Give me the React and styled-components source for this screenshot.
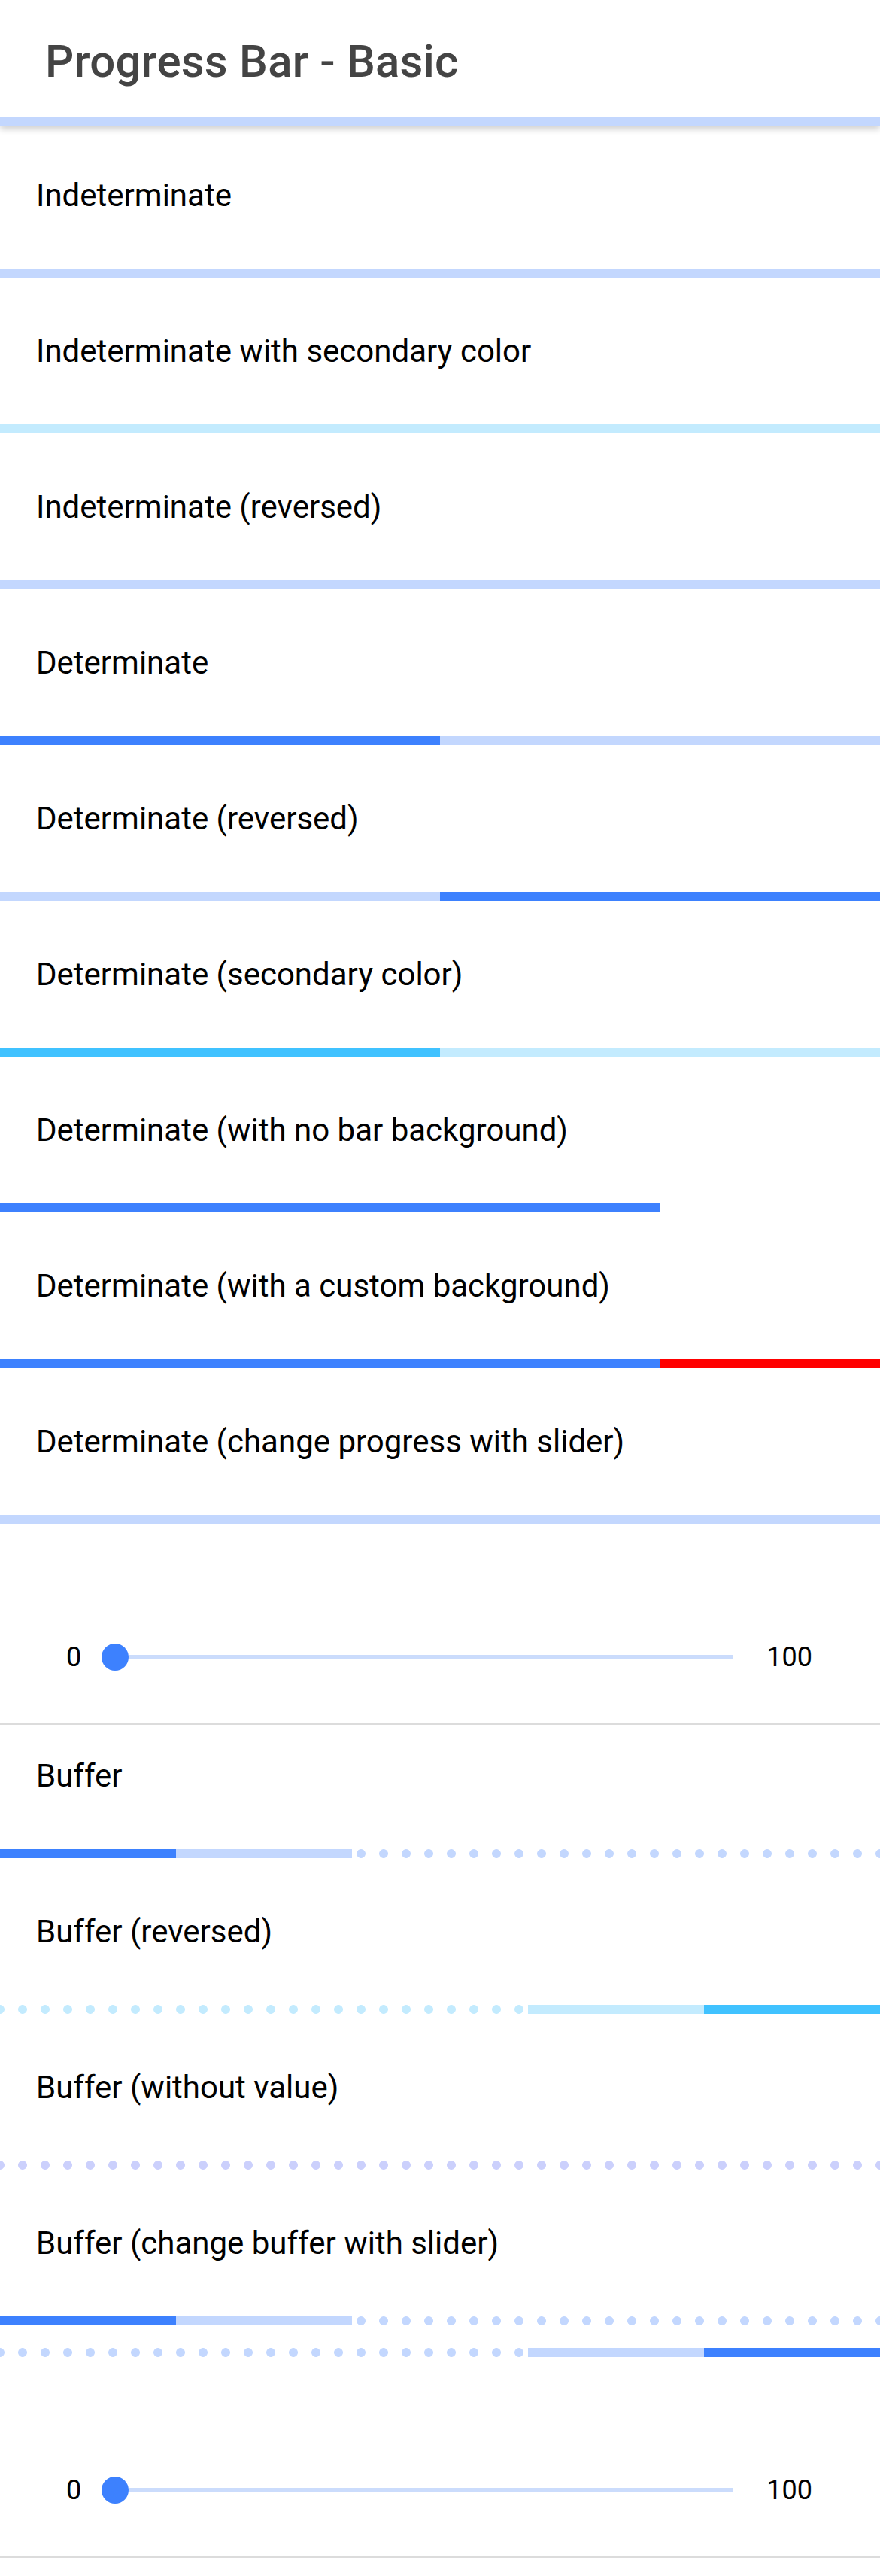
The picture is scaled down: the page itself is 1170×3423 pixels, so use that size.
import React from 'react';
import styled, { createGlobalStyle } from 'styled-components';

const GlobalStyle = createGlobalStyle`
  html, body {
    margin: 0;
    padding: 0;
    background: #ffffff;
  }
  body {
    font-family: Roboto, "Noto Sans", "Liberation Sans", sans-serif;
    color: #000;
  }
`;

const PRIMARY = '#3d81fe';
const PRIMARY_LIGHT = '#c3d7fe';
const SECONDARY = '#40c2ff';
const SECONDARY_LIGHT = '#c3ebfe';

const Page = styled.div`
  width: 1170px;
  min-height: 3423px;
  background: #fff;
`;

const AppBar = styled.header`
  position: relative;
  z-index: 1;
  background: #fff;
  box-shadow: 0 4px 8px rgba(0, 0, 0, 0.18);
`;

const Title = styled.h1`
  margin: 0;
  height: 156px;
  display: flex;
  align-items: center;
  padding: 6px 0 0 60px;
  box-sizing: border-box;
  font-size: 60px;
  font-weight: 500;
  color: #444;
  letter-spacing: 0.2px;
`;

const Item = styled.section`
  display: flex;
  flex-direction: column;
`;

const Label = styled.div`
  padding: ${(p) => p.$top}px 48px 72px;
  font-size: 42px;
  line-height: 50px;
  color: #000;
`;

const Bar = styled.div`
  display: flex;
  flex-direction: ${(p) => (p.$reversed ? 'row-reverse' : 'row')};
  height: 12px;
  overflow: hidden;
  background-color: ${(p) => p.$bg || 'transparent'};
  background-image: ${(p) =>
    p.$dots
      ? `radial-gradient(circle, ${p.$dots} 0, ${p.$dots} 5.5px, transparent 6.3px)`
      : 'none'};
  background-size: 30px 12px;
  background-position: -15px 0;
  background-repeat: repeat-x;
  & + & {
    margin-top: 30px;
  }
`;

const Fill = styled.div`
  flex: none;
  height: 100%;
  background: ${(p) => p.$color};
`;

const SliderRow = styled.div`
  display: flex;
  align-items: center;
  height: 50px;
  padding: 152px 90px 62px 88px;
`;

const SliderValue = styled.span`
  font-size: 36px;
  line-height: 50px;
  color: #000;
`;

const Track = styled.div`
  position: relative;
  flex: 1;
  height: 6px;
  margin: 0 44px 0 45px;
  background: #cbdcfc;
`;

const Thumb = styled.span`
  position: absolute;
  top: 50%;
  left: ${(p) => p.$value}%;
  width: 36px;
  height: 36px;
  border-radius: 50%;
  background: ${PRIMARY};
  transform: translate(-50%, -50%);
`;

const Divider = styled.hr`
  margin: 0;
  border: none;
  height: 3px;
  background: #dcdcdc;
`;

const Progress = ({ value, buffer, color = PRIMARY, light = PRIMARY_LIGHT, bg, dots, reversed }) => {
  if (buffer !== undefined) {
    return (
      <Bar $reversed={reversed} $dots={dots || light}>
        {value > 0 && <Fill $color={color} style={{ width: `${value}%` }} />}
        {buffer > value && <Fill $color={light} style={{ width: `${buffer - value}%` }} />}
      </Bar>
    );
  }
  if (value === undefined) {
    return <Bar $bg={light} />;
  }
  return (
    <Bar $reversed={reversed} $bg={bg === undefined ? light : bg}>
      <Fill $color={color} style={{ width: `${value}%` }} />
    </Bar>
  );
};

const Row = ({ label, top = 73, children }) => (
  <Item>
    <Label $top={top}>{label}</Label>
    {children}
  </Item>
);

const SliderBlock = ({ value }) => (
  <>
    <SliderRow>
      <SliderValue>0</SliderValue>
      <Track>
        <Thumb $value={value} />
      </Track>
      <SliderValue>100</SliderValue>
    </SliderRow>
    <Divider />
  </>
);

export default function App() {
  return (
    <Page>
      <GlobalStyle />
      <AppBar>
        <Title>Progress Bar - Basic</Title>
        <Progress />
      </AppBar>

      <Row label="Indeterminate" top={67}>
        <Progress />
      </Row>
      <Row label="Indeterminate with secondary color">
        <Progress color={SECONDARY} light={SECONDARY_LIGHT} />
      </Row>
      <Row label="Indeterminate (reversed)">
        <Progress />
      </Row>
      <Row label="Determinate">
        <Progress value={50} />
      </Row>
      <Row label="Determinate (reversed)">
        <Progress value={50} reversed />
      </Row>
      <Row label="Determinate (secondary color)">
        <Progress value={50} color={SECONDARY} light={SECONDARY_LIGHT} />
      </Row>
      <Row label="Determinate (with no bar background)">
        <Progress value={75} bg="transparent" />
      </Row>
      <Row label="Determinate (with a custom background)">
        <Progress value={75} bg="#ff0000" />
      </Row>
      <Row label="Determinate (change progress with slider)">
        <Progress value={0} />
      </Row>
      <SliderBlock value={0} />

      <Row label="Buffer" top={43}>
        <Progress value={20} buffer={40} />
      </Row>
      <Row label="Buffer (reversed)">
        <Progress value={20} buffer={40} reversed color={SECONDARY} light={SECONDARY_LIGHT} />
      </Row>
      <Row label="Buffer (without value)">
        <Progress value={0} buffer={0} dots="#cbd0fc" />
      </Row>
      <Row label="Buffer (change buffer with slider)">
        <Bar $dots={PRIMARY_LIGHT}>
          <Fill $color={PRIMARY} style={{ width: '20%' }} />
          <Fill $color={PRIMARY_LIGHT} style={{ width: '20%' }} />
        </Bar>
        <Bar $reversed $dots={PRIMARY_LIGHT}>
          <Fill $color={PRIMARY} style={{ width: '20%' }} />
          <Fill $color={PRIMARY_LIGHT} style={{ width: '20%' }} />
        </Bar>
      </Row>
      <SliderBlock value={0} />
    </Page>
  );
}
